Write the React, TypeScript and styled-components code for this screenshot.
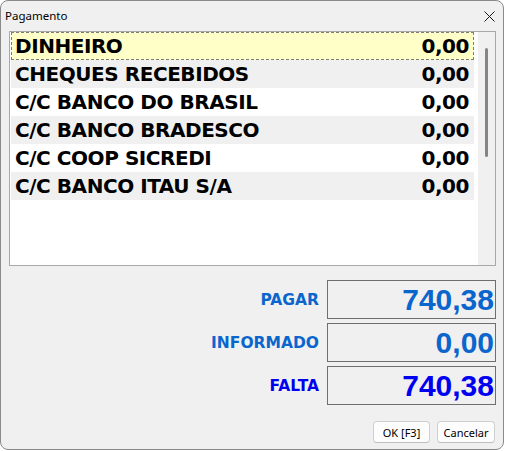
import React from 'react'
import styled, { createGlobalStyle } from 'styled-components'

const GlobalStyle = createGlobalStyle`
  html, body {
    margin: 0;
    padding: 0;
    background: #ffffff;
  }
  * {
    box-sizing: border-box;
  }
`

const Window = styled.div`
  width: 504px;
  height: 450px;
  border: 1px solid #8a8a8a;
  border-radius: 8px;
  background: #f0f0f0;
  display: flex;
  flex-direction: column;
  overflow: hidden;
  font-family: 'Segoe UI', 'Noto Sans', sans-serif;
`

const TitleBar = styled.div`
  height: 30px;
  display: flex;
  align-items: center;
  justify-content: space-between;
  padding: 0 8px 0 4px;
  flex-shrink: 0;
`

const Title = styled.span`
  font-size: 11.5px;
  color: #000;
  margin-top: -1px;
`

const CloseButton = styled.div`
  width: 12px;
  height: 12px;
  display: flex;
  align-items: center;
  justify-content: center;
`

const Content = styled.div`
  flex: 1;
  display: flex;
  flex-direction: column;
  padding: 0 7px 0 8px;
`

const ListBox = styled.div`
  height: 235px;
  border: 1px solid #a8a8a8;
  background: #ffffff;
  display: flex;
`

const Rows = styled.div`
  flex: 1;
  padding: 0 4px 0 1px;
`

const Row = styled.div<{ $tone: 'selected' | 'even' | 'odd' }>`
  height: 28px;
  display: flex;
  align-items: center;
  justify-content: space-between;
  padding: 0 5px 0 4px;
  font-family: 'DejaVu Sans', Verdana, sans-serif;
  font-weight: bold;
  font-size: 20px;
  letter-spacing: -0.45px;
  color: #000;
  white-space: nowrap;
  background: ${(p) =>
    p.$tone === 'selected' ? '#ffffc8' : p.$tone === 'even' ? '#f0f0f0' : '#ffffff'};
  outline: ${(p) => (p.$tone === 'selected' ? '1px dashed #7c7c7c' : 'none')};
  outline-offset: -1px;
`

const Track = styled.div`
  width: 17px;
  background: #f0f0f0;
  display: flex;
  justify-content: center;
  padding-top: 16px;
`

const Thumb = styled.div`
  width: 3px;
  height: 109px;
  border-radius: 2px;
  background: #858585;
`

const Summary = styled.div`
  margin-top: 14px;
  display: grid;
  grid-template-columns: auto 169px;
  justify-content: end;
  column-gap: 8px;
  row-gap: 4px;
  align-items: center;
`

const Label = styled.div<{ $color: string }>`
  font-family: 'DejaVu Sans', Verdana, sans-serif;
  font-weight: bold;
  font-size: 15.5px;
  color: ${(p) => p.$color};
  text-align: right;
`

const ValueBox = styled.div<{ $color: string }>`
  height: 39px;
  border: 1px solid #6e6e6e;
  display: flex;
  align-items: center;
  justify-content: flex-end;
  padding-right: 1px;
  font-family: 'Liberation Sans', Arial, sans-serif;
  font-weight: bold;
  font-size: 30px;
  color: ${(p) => p.$color};
`

const Footer = styled.div`
  margin-top: 16px;
  display: flex;
  justify-content: flex-end;
  gap: 7px;
  padding-right: 1px;
`

const Button = styled.button<{ $width: number }>`
  width: ${(p) => p.$width}px;
  height: 22px;
  padding: 0;
  border: 1px solid #cfcfcf;
  border-bottom-color: #bdbdbd;
  border-radius: 4px;
  background: #fdfdfd;
  font-family: 'Segoe UI', 'Noto Sans', sans-serif;
  font-size: 11px;
  color: #000;
`

const accounts = [
  'DINHEIRO',
  'CHEQUES RECEBIDOS',
  'C/C BANCO DO BRASIL',
  'C/C BANCO BRADESCO',
  'C/C COOP SICREDI',
  'C/C BANCO ITAU S/A',
]

const totals = [
  { label: 'PAGAR', value: '740,38', color: '#0a66cc' },
  { label: 'INFORMADO', value: '0,00', color: '#0a66cc' },
  { label: 'FALTA', value: '740,38', color: '#0000f0' },
]

export default function App() {
  return (
    <>
      <GlobalStyle />
      <Window>
        <TitleBar>
          <Title>Pagamento</Title>
          <CloseButton>
            <svg width="11" height="11" viewBox="0 0 11 11">
              <path d="M0.5 0.5 L10.5 10.5 M10.5 0.5 L0.5 10.5" stroke="#1a1a1a" strokeWidth="1" />
            </svg>
          </CloseButton>
        </TitleBar>
        <Content>
          <ListBox>
            <Rows>
              {accounts.map((name, i) => (
                <Row key={name} $tone={i === 0 ? 'selected' : i % 2 === 1 ? 'even' : 'odd'}>
                  <span>{name}</span>
                  <span>0,00</span>
                </Row>
              ))}
            </Rows>
            <Track>
              <Thumb />
            </Track>
          </ListBox>
          <Summary>
            {totals.map((t) => (
              <React.Fragment key={t.label}>
                <Label $color={t.color}>{t.label}</Label>
                <ValueBox $color={t.color}>{t.value}</ValueBox>
              </React.Fragment>
            ))}
          </Summary>
          <Footer>
            <Button $width={57}>OK [F3]</Button>
            <Button $width={58}>Cancelar</Button>
          </Footer>
        </Content>
      </Window>
    </>
  )
}
